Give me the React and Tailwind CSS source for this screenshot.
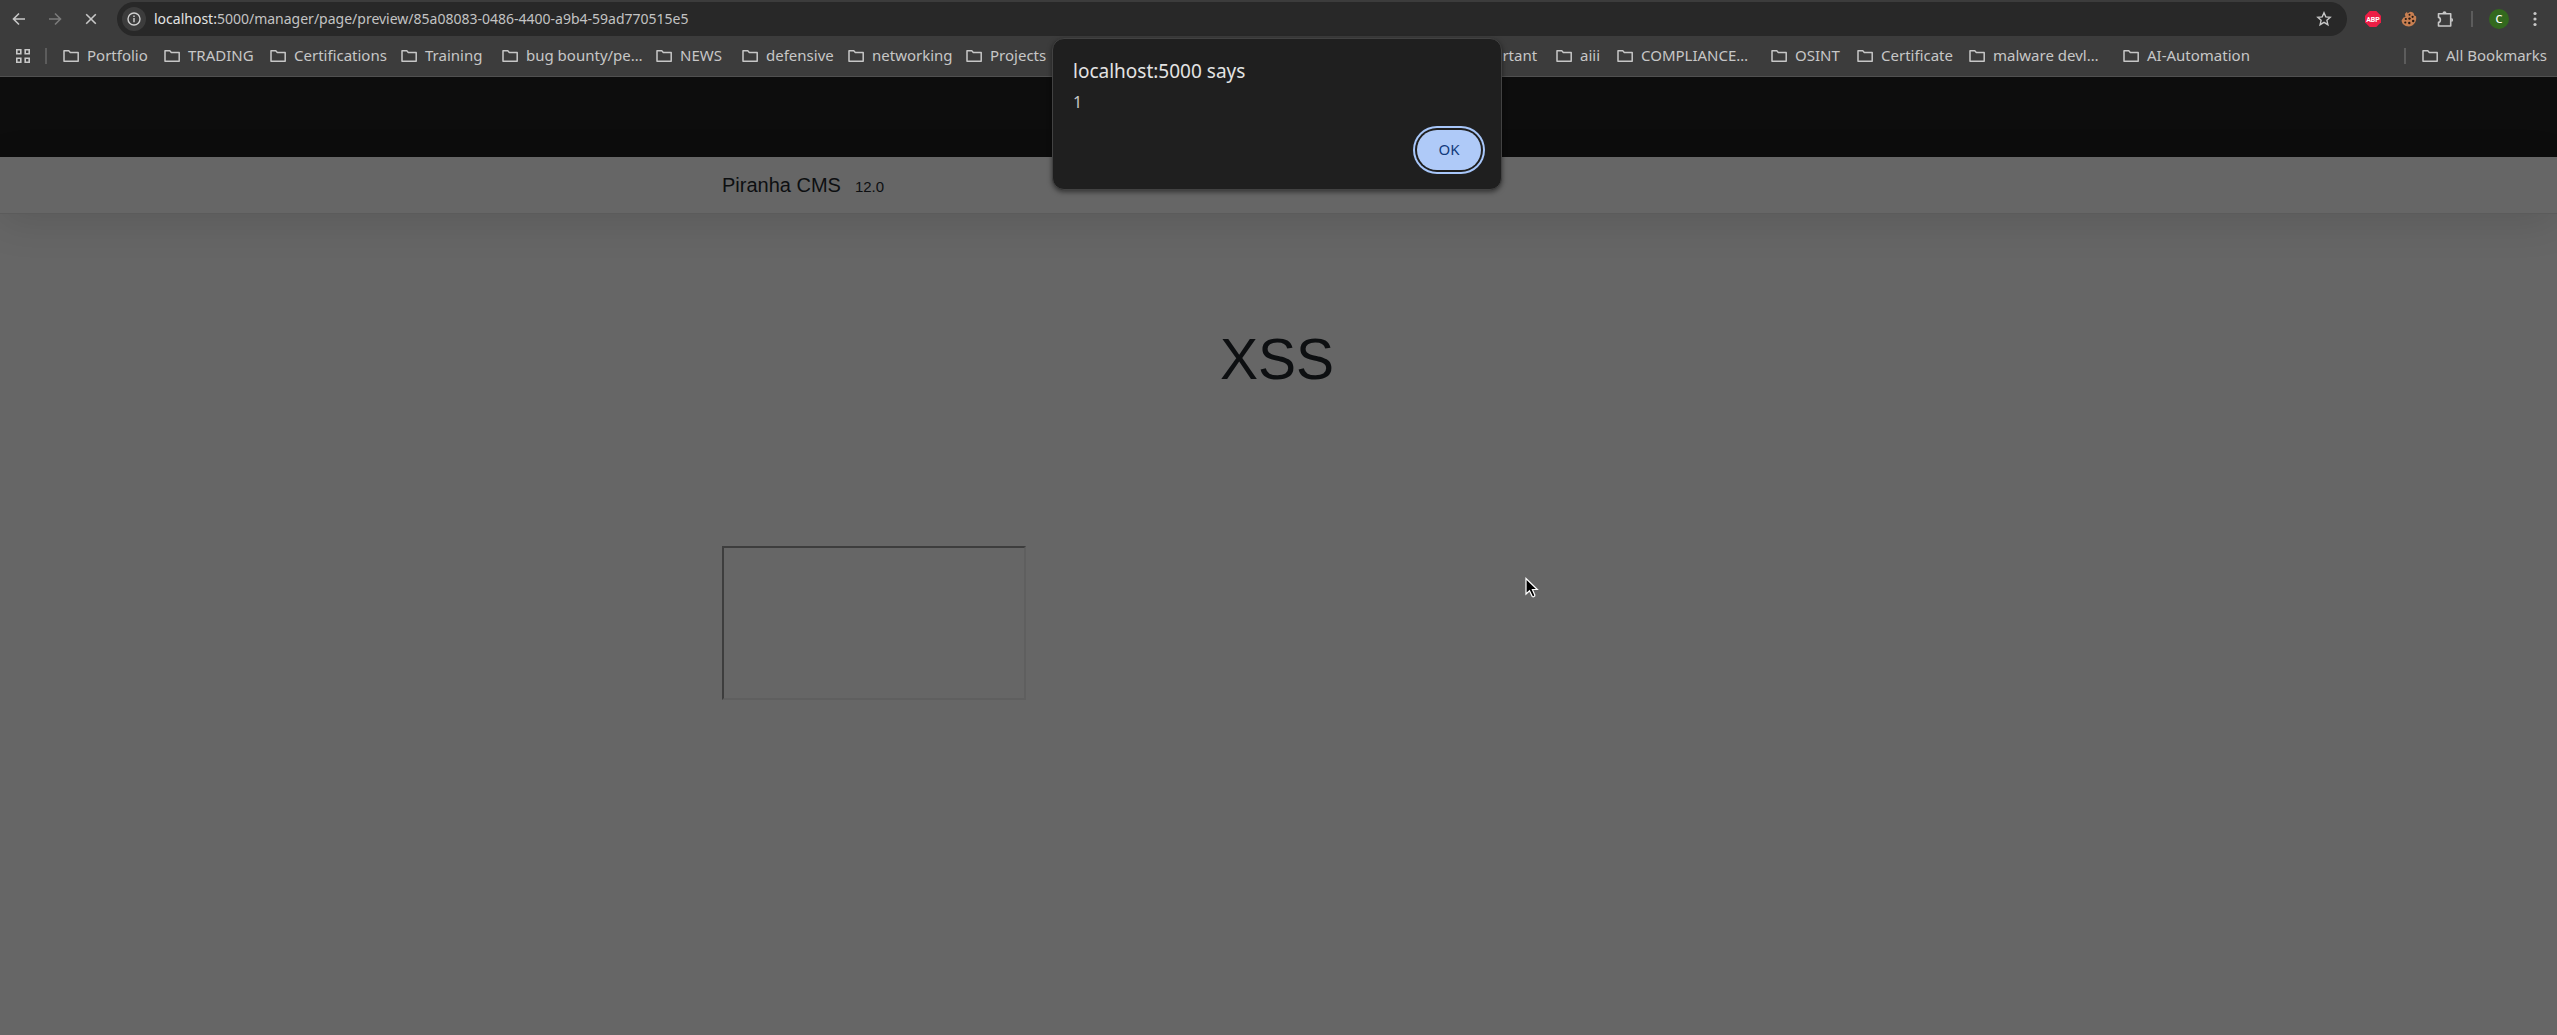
import React from "react";

const bookmarks = [
  { label: "Portfolio", w: "w-[101px]" },
  { label: "TRADING", w: "w-[106px]" },
  { label: "Certifications", w: "w-[131px]" },
  { label: "Training", w: "w-[101px]" },
  { label: "bug bounty/pe…", w: "w-[154px]" },
  { label: "NEWS", w: "w-[86px]" },
  { label: "defensive", w: "w-[106px]" },
  { label: "networking", w: "w-[118px]" },
  { label: "Projects", w: "w-[475px]" },
  { label: "Important", w: "w-[115px]" },
  { label: "aiii", w: "w-[61px]" },
  { label: "COMPLIANCE…", w: "w-[154px]" },
  { label: "OSINT", w: "w-[86px]" },
  { label: "Certificate", w: "w-[112px]" },
  { label: "malware devl…", w: "w-[154px]" },
  { label: "AI-Automation", w: "w-[140px]" },
];

function Folder() {
  return (
    <svg width="16" height="14" viewBox="0 0 16 14" fill="none" stroke="#c7c7c7" strokeWidth="1.5" strokeLinejoin="round" className="shrink-0" aria-hidden="true">
      <path d="M1 1.8h4.800l1.500 1.600h7.900v8.800H1z" />
    </svg>
  );
}

function Bookmark({ label, w }) {
  return (
    <button className={`flex shrink-0 items-center gap-2 whitespace-nowrap ${w}`}>
      <Folder />
      <span className="pb-0.5">{label}</span>
    </button>
  );
}

function Toolbar() {
  return (
    <div className="flex items-center pr-[17px] pl-3 pt-[2px]">
      <button aria-label="Back" className="w-9">
        <svg width="14" height="14" viewBox="0 0 14 14" fill="none" stroke="#c7c7c7" strokeWidth="1.6" aria-hidden="true"><path d="M13 7H2M7 1.5L1.5 7L7 12.5" /></svg>
      </button>
      <button aria-label="Forward" className="w-9">
        <svg width="14" height="14" viewBox="0 0 14 14" fill="none" stroke="#7b7b7b" strokeWidth="1.6" aria-hidden="true"><path d="M1 7h11M7 1.5L12.5 7L7 12.5" /></svg>
      </button>
      <button aria-label="Stop loading" className="w-[33px]">
        <svg width="14" height="14" viewBox="0 0 14 14" fill="none" stroke="#c7c7c7" strokeWidth="1.6" aria-hidden="true"><path d="M2.2 2.2l9.6 9.6M11.8 2.2l-9.6 9.6" /></svg>
      </button>
      <div className="flex h-[34px] flex-1 items-center rounded-full bg-[#282828] pr-[15px] pl-[5px]">
        <button aria-label="View site information" className="flex h-6 w-6 items-center justify-center rounded-full bg-[#3c3c3c]">
          <svg width="14" height="14" viewBox="0 0 14 14" fill="none" stroke="#d0d0d0" strokeWidth="1.4" aria-hidden="true"><circle cx="7" cy="7" r="6" /><path d="M7 6v4.2M7 3.6v1.5" /></svg>
        </button>
        <div role="textbox" aria-label="Address" className="flex-1 pl-2 text-[14px] leading-5 text-[#c3c3c3]">
          <span className="text-[#e3e3e3]">localhost:</span>5000/manager/page/preview/85a08083-0486-4400-a9b4-59ad770515e5
        </div>
        <button aria-label="Bookmark this tab">
          <svg width="16" height="16" viewBox="0 0 16 16" fill="none" stroke="#c7c7c7" strokeWidth="1.4" aria-hidden="true"><path d="M8 1.8l1.8 4.1 4.4.4-3.3 3 1 4.4L8 11.4l-3.9 2.3 1-4.4-3.3-3 4.4-.4z" /></svg>
        </button>
      </div>
      <div className="flex items-center pl-[18px]">
        <button aria-label="Adblock Plus" className="w-9">
          <svg width="16" height="16" viewBox="0 0 16 16" aria-hidden="true">
            <path d="M4.7 0h6.6L16 4.7v6.6L11.3 16H4.7L0 11.3V4.7z" fill="#ed1e45" />
            <text x="8" y="10.5" textAnchor="middle" fontFamily="Roboto, sans-serif" fontWeight="700" fontSize="7" fill="#fff">ABP</text>
          </svg>
        </button>
        <button aria-label="Cookie Editor" className="w-9">
          <svg width="16" height="16" viewBox="0 0 16 16" aria-hidden="true">
            <path d="M6 .8l.5 1.700L8 1.500 9.500.800c1.500.2 2.500.8 3.300 1.700l.5 2 1.700.800c1.200 5-2.200 10.100-7.200 10.100C3.500 15.400.6 12.500.6 9.200L2.500 6.500l2-.5-.7-3z" fill="#c87f51" />
            <g fill="#241a15"><circle cx="8.500" cy="3.800" r="1" /><circle cx="11.600" cy="5.800" r="1.100" /><circle cx="4.800" cy="8" r="1.100" /><circle cx="8.500" cy="7.600" r="1.200" /><circle cx="12.200" cy="10" r="1.200" /><circle cx="4.300" cy="11.500" r="1.100" /><circle cx="8.300" cy="12" r="1.200" /></g>
          </svg>
        </button>
        <button aria-label="Extensions" className="w-[34px]">
          <svg width="17" height="17" viewBox="0 0 17 17" fill="none" stroke="#c7c7c7" strokeWidth="1.6" strokeLinejoin="round" aria-hidden="true">
            <path d="M1.500 2.800h12.200v12.200H1.500v-3.600c2.500-.4 2.500-4.600 0-5z" />
            <path d="M5.500 2.300a2 2 0 0 1 4 0zM14.200 7a1.900 1.900 0 0 1 0 3.800z" fill="#c7c7c7" stroke="none" />
          </svg>
        </button>
        <div className="h-4 w-[2px] bg-[#5c5c5c]" />
        <button aria-label="Profile" className="ml-4 flex h-5 w-5 items-center justify-center rounded-full bg-[#33691e] text-[11px] leading-4 font-medium text-white">C</button>
        <button aria-label="Menu" className="ml-[21px]">
          <svg width="10" height="16" viewBox="0 0 10 16" fill="#c7c7c7" aria-hidden="true"><circle cx="5" cy="2.5" r="1.6" /><circle cx="5" cy="8" r="1.6" /><circle cx="5" cy="13.5" r="1.6" /></svg>
        </button>
      </div>
    </div>
  );
}

function BookmarksBar() {
  return (
    <nav aria-label="Bookmarks" className="flex h-[41px] items-center border-b border-[#505050] pr-[14px] pl-4 text-[15px] leading-5 text-[#c7c7c7]">
      <button aria-label="Apps" className="w-[29px]">
        <svg width="14" height="14" viewBox="0 0 14 14" fill="none" stroke="#c7c7c7" strokeWidth="1.6" aria-hidden="true"><path d="M.8.8h4v4h-4zM9.2.8h4v4h-4zM.8 9.2h4v4h-4zM9.2 9.2h4v4h-4z" /></svg>
      </button>
      <div className="mr-4 h-4 w-[2px] bg-[#5c5c5c]" />
      {bookmarks.map((b) => (
        <Bookmark key={b.label} {...b} />
      ))}
      <div className="mr-4 ml-auto h-4 w-[2px] bg-[#5c5c5c]" />
      <Bookmark label="All Bookmarks" w="w-[121px]" />
    </nav>
  );
}

function Alert() {
  return (
    <div className="absolute inset-x-0 top-[38px] flex justify-center pr-[3px]">
      <div role="alertdialog" aria-labelledby="alert-title" aria-describedby="alert-text" className="flex w-[450px] flex-col rounded-xl border border-[#424242] bg-[#1f1f1f] px-5 pt-[18px] pb-[19px] shadow-[0_2px_5px_rgba(0,0,0,0.5)]">
        <h2 id="alert-title" className="text-[19px] leading-7 text-[#e3e3e3]">localhost:5000 says</h2>
        <p id="alert-text" className="mt-[5px] text-[16px] leading-6 text-[#c7c7c7]">1</p>
        <button className="mt-4 h-10 w-16 self-end rounded-full bg-[#afcaf8] pb-0.5 text-[15px] text-[#123a7c] ring-2 ring-[#a8c7fa] ring-offset-2 ring-offset-[#1f1f1f]">OK</button>
      </div>
    </div>
  );
}

export default function App() {
  return (
    <div className="relative flex min-h-screen flex-col overflow-hidden bg-[#666] font-['Noto_Sans',sans-serif]">
      <header className="bg-[#3c3c3c]">
        <Toolbar />
        <BookmarksBar />
      </header>
      <div className="flex-1 font-['Liberation_Sans',Arial,sans-serif] text-[#0d0f11]">
        <div className="h-20 bg-[#0d0d0d]" />
        <div className="h-[57px] border-b border-[#5b5b5b] pr-[3px] shadow-[0_8px_40px_rgba(0,0,0,0.12)]">
          <div className="mx-auto flex h-full max-w-[1140px] items-center gap-[14px] px-[15px]">
            <a href="#home" className="text-[20px] leading-[30px]">Piranha CMS</a>
            <span className="pt-1 text-[15px] leading-5">12.0</span>
          </div>
        </div>
        <div className="pr-[3px]">
          <main className="mx-auto max-w-[1140px] px-[15px]">
            <h1 className="pt-[111px] text-center text-[57px] leading-[68px]">XSS</h1>
            <iframe title="Embedded content" className="mt-[153px] h-[154px] w-[304px] border-2 border-t-[#3d3d3d] border-r-[#5f5f5f] border-b-[#5f5f5f] border-l-[#3d3d3d]" />
          </main>
        </div>
      </div>
      <Alert />
      <svg className="absolute top-[577px] left-[1525px]" width="14" height="22" viewBox="0 0 14 22" aria-hidden="true">
        <path d="M1 1.500v15.500l3.500-3.300 2.700 5.600c1 1 3 .2 2.600-1.400L7.400 12.500h4.900z" fill="#000" stroke="#fff" strokeWidth="1.2" />
      </svg>
    </div>
  );
}
